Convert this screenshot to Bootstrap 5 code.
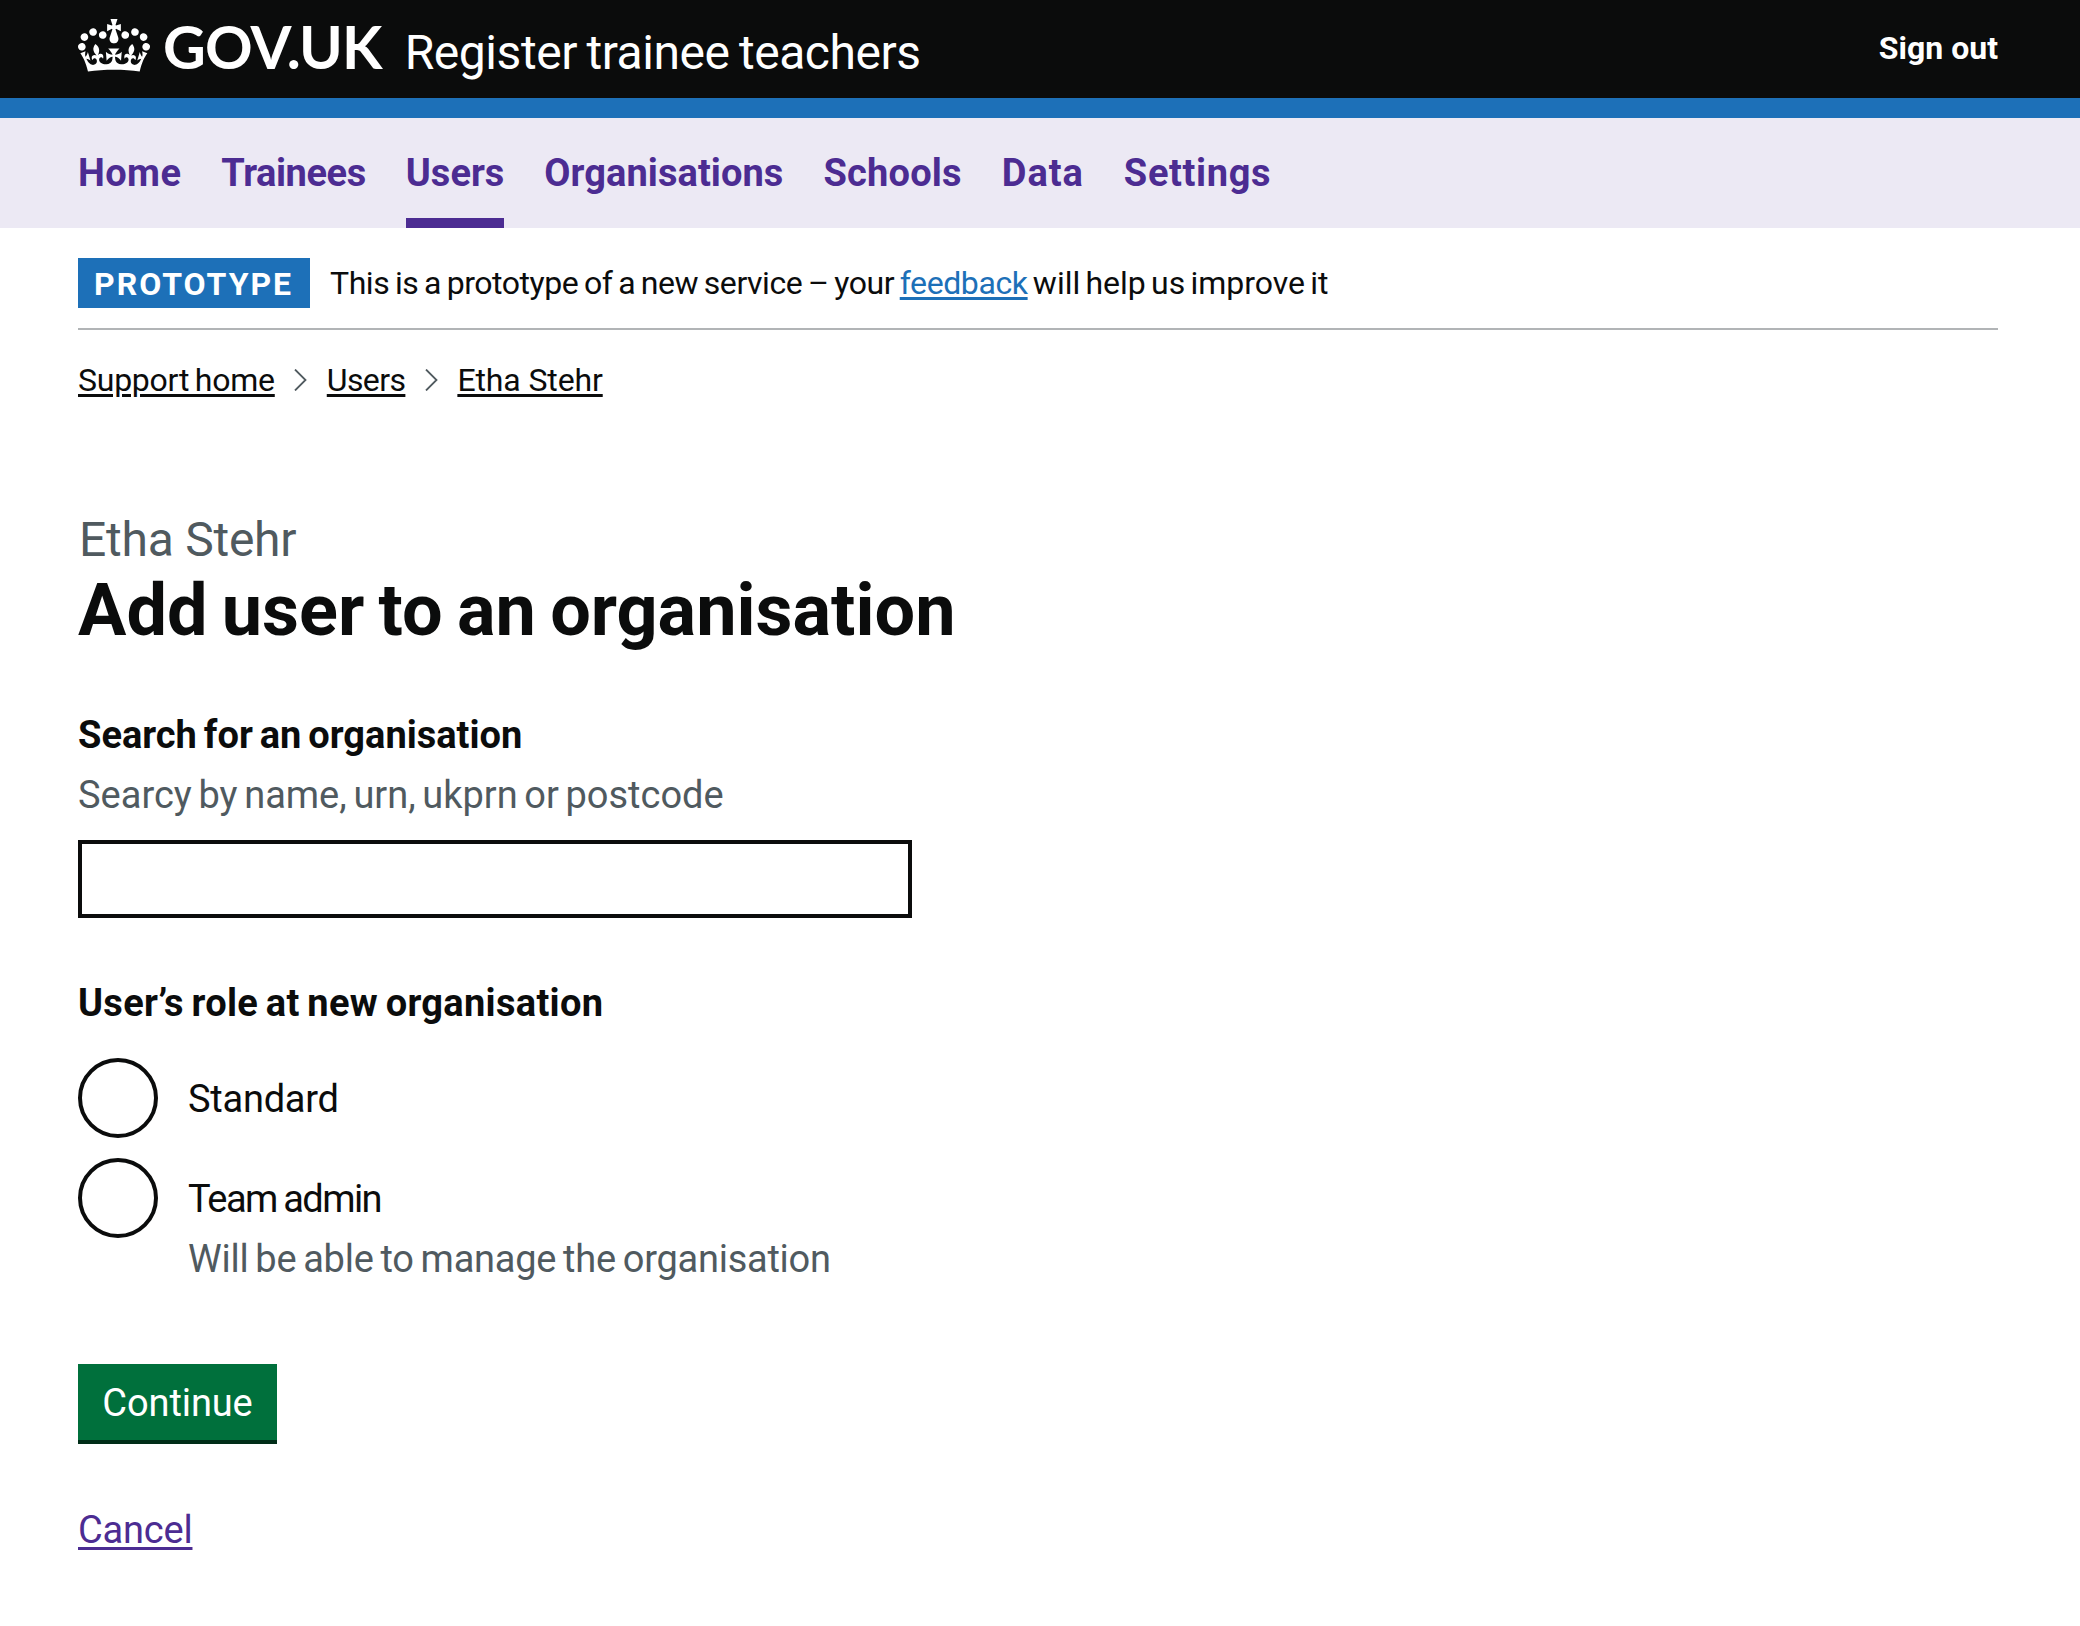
<!DOCTYPE html>
<html lang="en">
<head>
<meta charset="utf-8">
<meta name="viewport" content="width=device-width, initial-scale=1">
<title>Add user to an organisation</title>
<link href="https://cdn.jsdelivr.net/npm/bootstrap@5.3.0/dist/css/bootstrap.min.css" rel="stylesheet">
<style>
  body { font-family: Roboto, "Noto Sans", sans-serif; font-size: 38px; line-height: 50px; color: #0b0c0c; background: #fff; font-variant-ligatures: none; white-space: nowrap; }
  .page-width { padding: 0 82px 0 78px; }
  .text-s { font-size: 32px; line-height: 40px; }
  .text-hint { color: #505a5f; }
  a { color: inherit; text-underline-offset: 4px; text-decoration-thickness: 3px; }

  .site-header { background: #0b0c0c; color: #fff; height: 118px; border-bottom: 20px solid #1d70b8; }
  .crown { width: 72px; height: 53px; margin-top: 19px; }
  .logotype { font: 700 59px/94px Lato, sans-serif; letter-spacing: -.75px; margin-left: 13px; }
  .service-name { font-size: 48px; line-height: 60px; letter-spacing: -.45px; word-spacing: -2px; margin-left: 23px; }
  .sign-out { font-size: 32px; line-height: 96px; }

  .main-nav { background: #ece9f4; height: 110px; gap: 40px; }
  .main-nav a { color: #4c2c92; line-height: 111px; height: 110px; font-weight: 700; text-decoration: none; }
  .main-nav a.active { box-shadow: inset 0 -10px #4c2c92; }
  .nav-home { letter-spacing: .4px; }
  .nav-trainees { letter-spacing: -.42px; }
  .nav-organisations { letter-spacing: .07px; }
  .nav-schools { letter-spacing: .2px; }
  .nav-data { letter-spacing: .95px; }
  .nav-settings { letter-spacing: .65px; }

  .phase { padding: 30px 0 20px; border-bottom: 2px solid #b1b4b6; }
  .phase.text-s { line-height: 50px; }
  .phase-tag { background: #1d70b8; color: #fff; width: 232px; height: 50px; line-height: 52px; padding-left: 16px; letter-spacing: 2px; margin-right: 20px; }
  .phase-lead { letter-spacing: -.45px; word-spacing: -1.8px; }
  .phase-tail { word-spacing: -2.7px; }
  .phase a { color: #1d70b8; text-underline-offset: 3px; letter-spacing: -.4px; }

  .crumbs { margin-top: 30px; }
  .crumbs a { text-underline-offset: 3px; letter-spacing: -.12px; }
  .crumbs a.crumb-home { letter-spacing: -.25px; word-spacing: -2px; }
  .crumbs a.crumb-users { letter-spacing: -.6px; }
  .crumbs svg { width: 13px; height: 22px; margin: 0 19.5px; }

  .caption { font-size: 48px; line-height: 60px; letter-spacing: -.25px; padding-left: 1px; margin-top: 110px; }
  .page-title { font-size: 72px; line-height: 82px; font-weight: 700; word-spacing: -3.6px; margin: 0 0 58px; }
  .field-label { font-weight: 700; word-spacing: -2.5px; margin: 0 0 10px; font-size: 38px; line-height: 50px; display: block; }
  .field-hint { word-spacing: -2.8px; line-height: 51px; height: 50px; }
  .search-input { width: 834px; height: 78px; border: 4px solid #0b0c0c; border-radius: 0; margin: 20px 0 60px; }
  .role-legend { margin-bottom: 30px; letter-spacing: .3px; word-spacing: -2px; }
  .role-row { height: 80px; }
  .role-input.form-check-input { width: 80px; height: 80px; border: 4px solid #0b0c0c; margin: 0 30px 0 0; float: none; flex: none; }
  .role-label { line-height: 83px; letter-spacing: -.25px; }
  .role-label-admin { letter-spacing: -1.55px; word-spacing: -1.5px; }
  .role-hint { margin: -4px 0 80px 110px; line-height: 51px; height: 50px; letter-spacing: -.25px; word-spacing: -2.3px; }
  .btn-continue { background: #00703c; color: #fff; width: 199px; height: 80px; border: 0; border-bottom: 4px solid #002d18; border-radius: 0; font-size: 38px; line-height: 76px; letter-spacing: -.1px; padding: 1px 0 0; }
  .cancel { color: #4c2c92; line-height: 52px; letter-spacing: -.2px; margin-top: 60px; }
</style>
<script src="https://cdn.jsdelivr.net/npm/bootstrap@5.3.0/dist/js/bootstrap.bundle.min.js"></script>
</head>
<body>
<header class="site-header page-width d-flex align-items-start">
  <svg class="crown" viewBox="0 0 132 97" preserveAspectRatio="none" fill="#fff" aria-hidden="true"><path d="M25 30.2c3.5 1.5 7.7-.2 9.1-3.7 1.5-3.6-.2-7.8-3.9-9.2-3.6-1.4-7.6.3-9.1 3.9-1.4 3.5.3 7.5 3.9 9zM9 39.5c3.6 1.5 7.8-.2 9.2-3.7 1.5-3.6-.2-7.8-3.9-9.1-3.6-1.5-7.6.2-9.1 3.8-1.4 3.5.3 7.5 3.8 9zM4.4 57.2c3.5 1.5 7.7-.2 9.1-3.8 1.5-3.6-.2-7.7-3.9-9.1-3.5-1.5-7.6.3-9.1 3.8-1.4 3.5.3 7.6 3.9 9.1zm38.3-21.4c3.5 1.5 7.7-.2 9.1-3.8 1.5-3.6-.2-7.7-3.9-9.1-3.6-1.5-7.6.3-9.1 3.8-1.3 3.6.4 7.7 3.9 9.1zm64.4-5.6c-3.6 1.5-7.8-.2-9.1-3.7-1.5-3.6.2-7.8 3.8-9.2 3.6-1.4 7.7.3 9.2 3.9 1.3 3.5-.4 7.5-3.9 9zm15.9 9.3c-3.6 1.5-7.7-.2-9.1-3.7-1.5-3.6.2-7.8 3.7-9.1 3.6-1.5 7.7.2 9.2 3.8 1.5 3.5-.3 7.5-3.8 9zm4.7 17.7c-3.6 1.5-7.8-.2-9.2-3.8-1.5-3.6.2-7.7 3.9-9.1 3.6-1.5 7.7.3 9.2 3.8 1.3 3.5-.4 7.6-3.9 9.1zM89.3 35.8c-3.6 1.5-7.8-.2-9.2-3.8-1.4-3.6.2-7.7 3.9-9.1 3.6-1.5 7.7.3 9.2 3.8 1.4 3.6-.3 7.7-3.9 9.1zM69.7 17.7l8.9 4.7V9.3l-8.9 2.8c-.2-.3-.5-.6-.9-.9L72.4 0H59.6l3.5 11.2c-.3.3-.6.5-.9.9l-8.8-2.8v13.1l8.8-4.7c.3.3.6.7.9.9l-5 15.4v.1c-.2.8-.4 1.6-.4 2.4 0 4.1 3.1 7.5 7 8.1h.2c.3 0 .7.1 1 .1.4 0 .7 0 1-.1h.2c4-.6 7.1-4.1 7.1-8.1 0-.8-.1-1.7-.4-2.4V34l-5.1-15.4c.4-.2.7-.6 1-.9zM66 92.8c16.9 0 32.8 1.1 47.1 3.2 4-16.9 8.9-26.7 14-33.5l-9.6-3.4c1 4.9 1.1 7.2 0 10.2-1.5-1.4-3-4.3-4.2-8.7L108.6 76c2.8-2 5-3.2 7.5-3.3-4.4 9.4-10 11.9-13.6 11.2-4.3-.8-6.3-4.6-5.6-7.9 1-4.7 5.7-5.9 8-.5 4.3-8.7-3-11.4-7.6-8.8 7.1-7.2 7.9-13.5 2.1-21.1-8 6.1-8.1 12.3-4.5 20.8-4.7-5.4-12.1-2.5-9.5 6.2 3.4-5.2 7.9-2 7.2 3.1-.6 4.3-6.4 7.8-13.5 7.2-10.3-.9-10.9-8-11.2-13.8 2.5-.5 7.1 1.8 11 7.3L80.2 60c-4.1 4.4-8 5.3-12.3 5.4 1.4-4.4 8-11.6 8-11.6H55.5s6.4 7.2 7.9 11.6c-4.2-.1-8-1-12.3-5.4l1.4 16.4c3.9-5.5 8.5-7.7 10.9-7.3-.3 5.8-.9 12.8-11.1 13.8-7.2.6-12.9-2.9-13.5-7.2-.7-5 3.8-8.3 7.1-3.1 2.7-8.7-4.6-11.6-9.4-6.2 3.7-8.5 3.6-14.7-4.6-20.8-5.8 7.6-5 13.9 2.2 21.1-4.7-2.6-11.9.1-7.7 8.8 2.3-5.5 7.1-4.2 8.1.5.7 3.3-1.3 7.1-5.7 7.9-3.5.7-9-1.8-13.5-11.2 2.5.1 4.7 1.3 7.5 3.3l-4.7-15.4c-1.2 4.4-2.7 7.2-4.3 8.7-1.1-3-.9-5.3 0-10.2l-9.5 3.4c5 6.9 9.9 16.7 14 33.5 14.8-2.1 30.8-3.2 47.7-3.2z"/></svg>
  <div class="d-flex align-items-baseline">
    <span class="logotype">GOV.UK</span>
    <span class="service-name">Register trainee teachers</span>
  </div>
  <a class="sign-out ms-auto fw-bold text-decoration-none" href="#">Sign out</a>
</header>

<nav class="main-nav page-width d-flex" aria-label="Primary">
  <a href="#" class="nav-home">Home</a>
  <a href="#" class="nav-trainees">Trainees</a>
  <a href="#" class="active" aria-current="page">Users</a>
  <a href="#" class="nav-organisations">Organisations</a>
  <a href="#" class="nav-schools">Schools</a>
  <a href="#" class="nav-data">Data</a>
  <a href="#" class="nav-settings">Settings</a>
</nav>

<div class="page-width">
  <div class="phase text-s d-flex">
    <strong class="phase-tag">PROTOTYPE</strong>
    <span><span class="phase-lead">This is a prototype of a new service – your </span><a href="#">feedback</a><span class="phase-tail"> will help us improve it</span></span>
  </div>

  <nav class="crumbs text-s d-flex align-items-center" aria-label="Breadcrumb">
    <a href="#" class="crumb-home">Support home</a>
    <svg viewBox="0 0 13 22" fill="none" stroke="#505a5f" stroke-width="1.8" aria-hidden="true"><path d="M1 .5 11.5 11 1 21.5"/></svg>
    <a href="#" class="crumb-users">Users</a>
    <svg viewBox="0 0 13 22" fill="none" stroke="#505a5f" stroke-width="1.8" aria-hidden="true"><path d="M1 .5 11.5 11 1 21.5"/></svg>
    <a href="#">Etha Stehr</a>
  </nav>

  <main>
    <div class="caption text-hint">Etha Stehr</div>
    <h1 class="page-title">Add user to an organisation</h1>
    <form>
      <label class="field-label" for="organisation">Search for an organisation</label>
      <div class="text-hint field-hint">Searcy by name, urn, ukprn or postcode</div>
      <input class="form-control search-input" id="organisation" type="text">

      <fieldset>
        <legend class="field-label role-legend float-none">User’s role at new organisation</legend>
        <div class="d-flex flex-column" style="gap:20px">
          <div class="role-row d-flex">
            <input class="form-check-input role-input" type="radio" name="role" id="standard">
            <label class="role-label" for="standard">Standard</label>
          </div>
          <div class="role-row d-flex">
            <input class="form-check-input role-input" type="radio" name="role" id="admin">
            <label class="role-label role-label-admin" for="admin">Team admin</label>
          </div>
        </div>
        <div class="role-hint text-hint">Will be able to manage the organisation</div>
      </fieldset>

      <button class="btn btn-continue d-block" type="button">Continue</button>
      <div class="cancel"><a href="#">Cancel</a></div>
    </form>
  </main>
</div>
</body>
</html>
